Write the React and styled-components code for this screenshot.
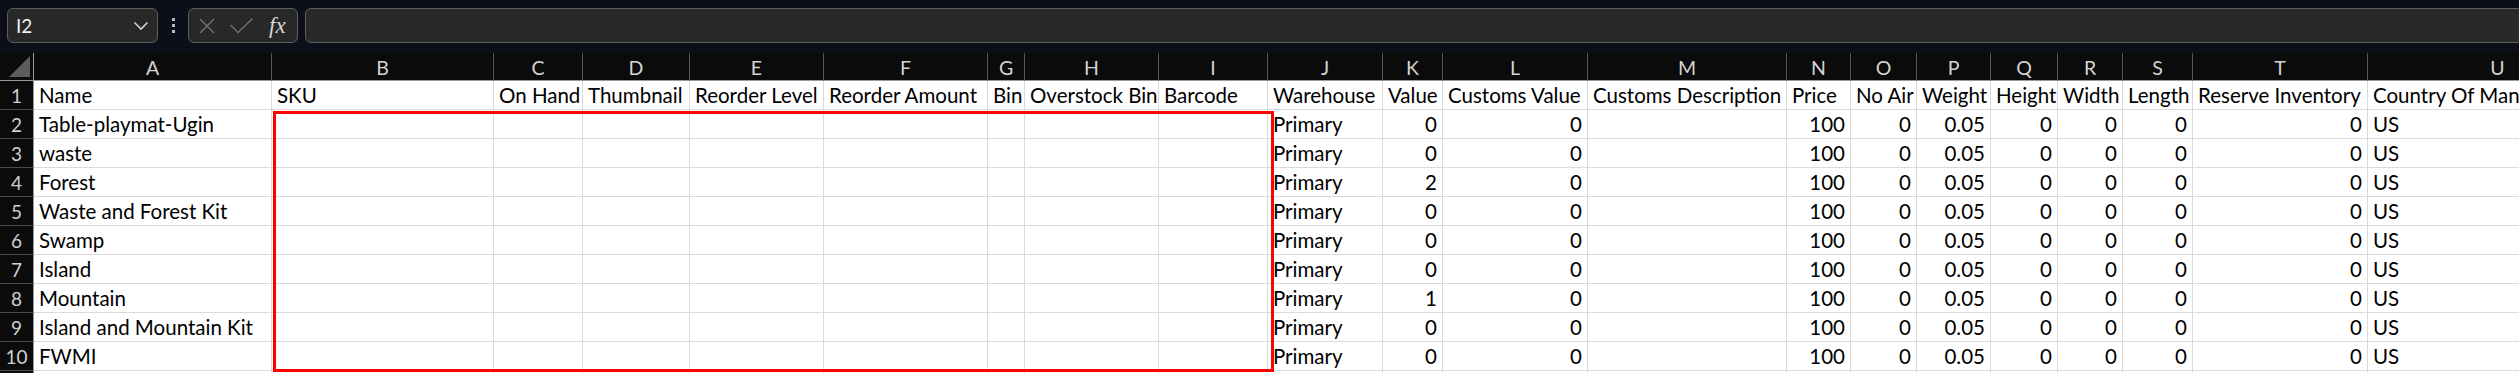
import React from 'react';
import styled, { createGlobalStyle } from 'styled-components';

const columns = [
  { key: 'A', width: 238 },
  { key: 'B', width: 222 },
  { key: 'C', width: 89 },
  { key: 'D', width: 107 },
  { key: 'E', width: 134 },
  { key: 'F', width: 164 },
  { key: 'G', width: 37 },
  { key: 'H', width: 134 },
  { key: 'I', width: 109 },
  { key: 'J', width: 115 },
  { key: 'K', width: 60 },
  { key: 'L', width: 145 },
  { key: 'M', width: 199 },
  { key: 'N', width: 64 },
  { key: 'O', width: 66 },
  { key: 'P', width: 74 },
  { key: 'Q', width: 67 },
  { key: 'R', width: 65 },
  { key: 'S', width: 70 },
  { key: 'T', width: 175 },
  { key: 'U', width: 260 },
];

const headers = [
  'Name', 'SKU', 'On Hand', 'Thumbnail', 'Reorder Level', 'Reorder Amount', 'Bin',
  'Overstock Bin', 'Barcode', 'Warehouse', 'Value', 'Customs Value', 'Customs Description',
  'Price', 'No Air', 'Weight', 'Height', 'Width', 'Length', 'Reserve Inventory',
  'Country Of Manufacture',
];

const items = [
  ['Table-playmat-Ugin', 0],
  ['waste', 0],
  ['Forest', 2],
  ['Waste and Forest Kit', 0],
  ['Swamp', 0],
  ['Island', 0],
  ['Mountain', 1],
  ['Island and Mountain Kit', 0],
  ['FWMI', 0],
  ['', null],
];

// index -> right aligned number columns
const numeric = new Set([10, 11, 13, 14, 15, 16, 17, 18, 19]);

const rowValues = ([name, value]) => {
  if (!name) return new Array(21).fill('');
  return [name, '', '', '', '', '', '', '', '', 'Primary', value, 0, '', 100, 0, '0.05', 0, 0, 0, 0, 'US'];
};

const GlobalStyle = createGlobalStyle`
  body {
    margin: 0;
    background: #0b0f19;
    font-family: Lato, "Open Sans", sans-serif;
    overflow: hidden;
  }
`;

const Page = styled.div`
  width: 2519px;
  height: 373px;
  overflow: hidden;
  background: #fff;
`;

const Toolbar = styled.div`
  height: 53px;
  box-sizing: border-box;
  background: #0b0f19;
  display: flex;
  align-items: flex-start;
  padding: 8px 0 0 7px;
`;

const NameBox = styled.div`
  width: 151px;
  height: 35px;
  box-sizing: border-box;
  border: 1px solid #5e5e5e;
  border-radius: 6px;
  background: #282828;
  display: flex;
  align-items: center;
  justify-content: space-between;
  padding: 0 8px 0 8px;
  color: #f0f0f0;
  font-size: 19px;
`;

const Dots = styled.div`
  width: 30px;
  height: 35px;
  display: flex;
  flex-direction: column;
  align-items: center;
  justify-content: center;
  gap: 3px;
  span {
    width: 3px;
    height: 3px;
    background: #b8b8b8;
  }
`;

const FxBox = styled.div`
  width: 110px;
  height: 35px;
  box-sizing: border-box;
  border: 1px solid #5e5e5e;
  border-radius: 6px;
  background: #282828;
  display: flex;
  align-items: center;
  padding: 0 8px 0 9px;
  gap: 13px;
`;

const Fx = styled.span`
  font-family: "Liberation Serif", "DejaVu Serif", serif;
  font-style: italic;
  font-size: 23px;
  color: #d6d6d6;
  margin-left: 2px;
`;

const FormulaInput = styled.div`
  flex: 1;
  height: 35px;
  margin-left: 7px;
  margin-right: -10px;
  box-sizing: border-box;
  border: 1px solid #5e5e5e;
  border-radius: 6px;
  background: #292929;
`;

const Sheet = styled.div`
  position: relative;
`;

const Row = styled.div`
  display: flex;
  height: ${(p) => (p.$head ? 28 : 29)}px;
`;

const RowHead = styled.div`
  flex: 0 0 34px;
  box-sizing: border-box;
  background: #0b0b0b;
  color: #cfcfcf;
  font-size: 19px;
  display: flex;
  align-items: center;
  justify-content: center;
  border-right: 1px solid #9a9a9a;
  border-bottom: 1px solid ${(p) => (p.$corner ? '#9a9a9a' : '#4a4a4a')};
  position: relative;
`;

const Corner = styled.div`
  position: absolute;
  right: 3px;
  bottom: 3px;
  width: 0;
  height: 0;
  border-left: 21px solid transparent;
  border-bottom: 21px solid #5c5c5c;
`;

const ColHead = styled.div`
  box-sizing: border-box;
  flex: 0 0 auto;
  background: #0b0b0b;
  color: #d4d4d4;
  font-size: 19.5px;
  display: flex;
  align-items: center;
  justify-content: center;
  padding-top: 2px;
  border-right: 1px solid #555;
  border-bottom: 1px solid #9a9a9a;
`;

const Cell = styled.div`
  box-sizing: border-box;
  flex: 0 0 auto;
  background: #fff;
  color: #000;
  font-size: 20.5px;
  line-height: 29px;
  white-space: nowrap;
  overflow: visible;
  text-align: ${(p) => (p.$num ? 'right' : 'left')};
  padding: 0 5px 0 5px;
  border-right: 1px solid #dadada;
  border-bottom: 1px solid #dadada;
`;

const Selection = styled.div`
  position: absolute;
  left: 273px;
  top: 58px;
  width: 1001px;
  height: 261px;
  box-sizing: border-box;
  border: 3px solid #ff0000;
  pointer-events: none;
`;

const Chevron = () => (
  <svg width="16" height="10" viewBox="0 0 16 10" fill="none">
    <path d="M1.5 1.5 L8 8 L14.5 1.5" stroke="#d0d0d0" strokeWidth="1.6" />
  </svg>
);

const Cross = () => (
  <svg width="18" height="18" viewBox="0 0 18 18">
    <path d="M2 2 L16 16 M16 2 L2 16" stroke="#6f6f6f" strokeWidth="1.5" />
  </svg>
);

const Check = () => (
  <svg width="25" height="18" viewBox="0 0 25 18" fill="none">
    <path d="M1.5 8 L9 15.5 L23.5 1.5" stroke="#6f6f6f" strokeWidth="1.5" />
  </svg>
);

export default function App() {
  return (
    <Page>
      <GlobalStyle />
      <Toolbar>
        <NameBox>
          <span>I2</span>
          <Chevron />
        </NameBox>
        <Dots>
          <span />
          <span />
          <span />
        </Dots>
        <FxBox>
          <Cross />
          <Check />
          <Fx>fx</Fx>
        </FxBox>
        <FormulaInput />
      </Toolbar>
      <Sheet>
        <Row $head>
          <RowHead $corner>
            <Corner />
          </RowHead>
          {columns.map((c) => (
            <ColHead key={c.key} style={{ width: c.width }}>
              {c.key}
            </ColHead>
          ))}
        </Row>
        <Row>
          <RowHead>1</RowHead>
          {columns.map((c, i) => (
            <Cell key={c.key} style={{ width: c.width }}>
              {headers[i]}
            </Cell>
          ))}
        </Row>
        {items.map((item, r) => (
          <Row key={r}>
            <RowHead>{r + 2}</RowHead>
            {rowValues(item).map((v, i) => (
              <Cell key={i} $num={numeric.has(i)} style={{ width: columns[i].width }}>
                {v}
              </Cell>
            ))}
          </Row>
        ))}
        <Selection />
      </Sheet>
    </Page>
  );
}
